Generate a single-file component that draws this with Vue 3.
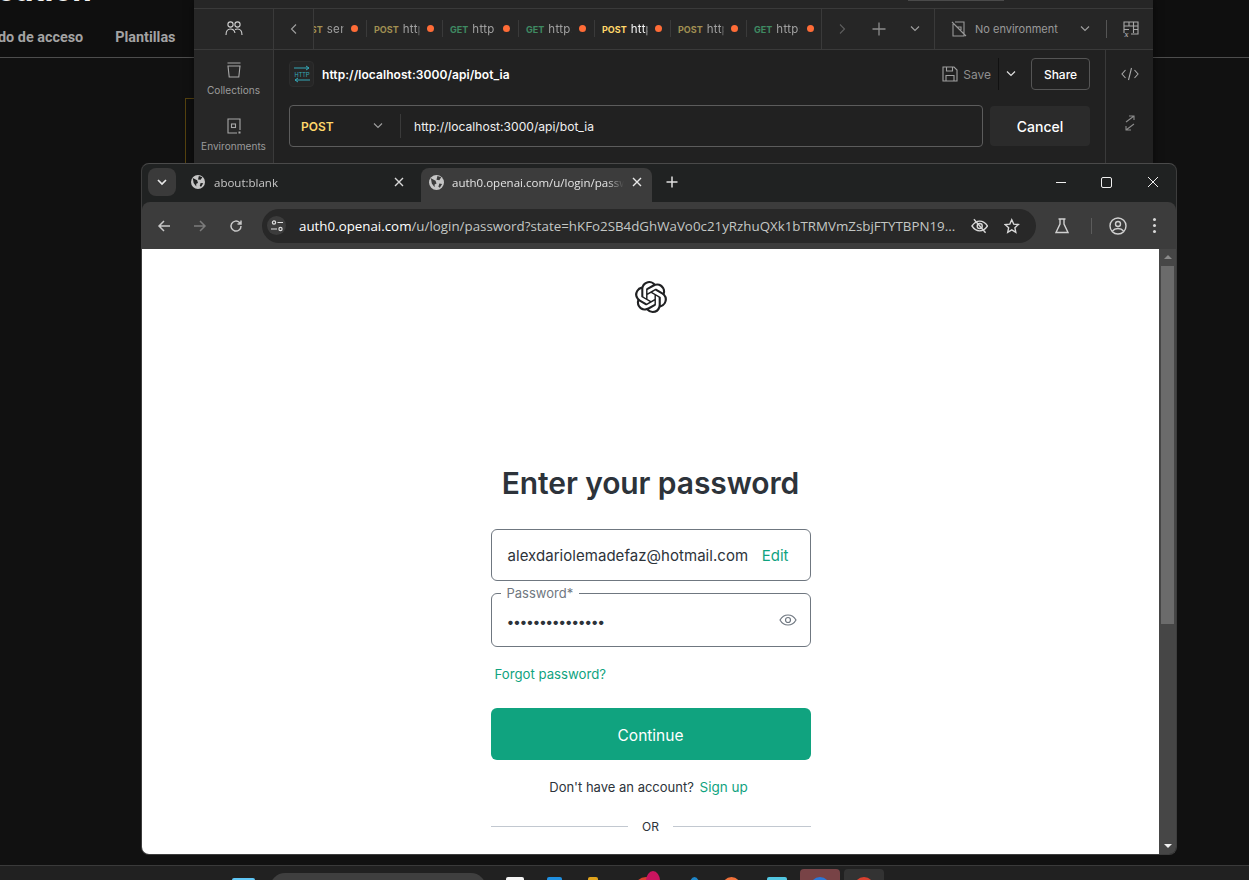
<template>
  <div class="desktop">
    <!-- page behind everything -->
    <div class="bg-page">
      <div class="bg-title">cation</div>
      <div class="bg-nav">
        <span class="bg-link first">do de acceso</span>
        <span class="bg-link">Plantillas</span>
      </div>
    </div>
    <div class="bg-box"></div>

    <!-- postman window -->
    <section class="pm">
      <div class="pm-top"><span class="pm-search"></span></div>
      <div class="pm-body">
        <aside class="pm-rail">
          <div class="rail-people">
            <svg width="20" height="20" viewBox="0 0 20 20" fill="none" stroke="#d0d0d0" stroke-width="1.1">
              <circle cx="6.5" cy="5.5" r="2.6" />
              <circle cx="13.5" cy="5.5" r="2.6" />
              <path d="M2 16c0-4 2-6 4.500-6s4 1.600 4.500 4M11 10.600c.8-.4 1.600-.6 2.500-.6 2.500 0 4.500 2 4.500 6" />
            </svg>
          </div>
          <div class="rail-item">
            <svg width="18" height="18" viewBox="0 0 18 18" fill="none" stroke="#a8a8a8" stroke-width="1.1">
              <path d="M2.500 2h13M3 5h12l-1.200 11H4.200z" />
            </svg>
            <span>Collections</span>
          </div>
          <div class="rail-item">
            <svg width="18" height="18" viewBox="0 0 18 18" fill="none" stroke="#a8a8a8" stroke-width="1.1">
              <path d="M15 13V2H3v14h9" />
              <rect x="6.500" y="7" width="4" height="3.500" />
              <rect x="13.500" y="14.500" width="2" height="2" fill="#a8a8a8" stroke="none" />
            </svg>
            <span>Environments</span>
          </div>
        </aside>
        <div class="pm-main">
          <div class="pm-tabbar">
            <div class="tab-nav">
              <svg width="10" height="12" viewBox="0 0 10 12" fill="none" stroke="#a0a0a0" stroke-width="1.1"><path d="M7 1.500 2.500 6 7 10.500" /></svg>
            </div>
            <div class="tab-list">
              <div v-for="(tab, i) in tabs" :key="i" class="tab" :class="{ active: tab.active }">
                <span class="tab-method" :class="tab.method.toLowerCase()">{{ tab.method }}</span>
                <span class="tab-name">{{ tab.name }}</span>
                <span class="tab-dot"></span>
              </div>
            </div>
            <div class="tab-tools">
              <svg width="10" height="12" viewBox="0 0 10 12" fill="none" stroke="#5e5e5e" stroke-width="1.1"><path d="M3 1.500 7.500 6 3 10.500" /></svg>
              <svg width="14" height="14" viewBox="0 0 14 14" fill="none" stroke="#8c8c8c" stroke-width="1.3"><path d="M7 .5v13M.5 7h13" /></svg>
              <svg width="10" height="8" viewBox="0 0 10 8" fill="none" stroke="#a0a0a0" stroke-width="1.1"><path d="M1 1.500 5 5.500l4-4" /></svg>
            </div>
            <div class="env">
              <svg width="16" height="16" viewBox="0 0 16 16" fill="none" stroke="#999" stroke-width="1.1">
                <path d="M2 3v12h11V1H4M1 1l14 14M6 6h4v3" />
              </svg>
              <span class="env-name">No environment</span>
              <svg class="env-chev" width="10" height="8" viewBox="0 0 10 8" fill="none" stroke="#a0a0a0" stroke-width="1.1"><path d="M1 1.500 5 5.500l4-4" /></svg>
              <span class="env-sep"></span>
              <svg width="16" height="16" viewBox="0 0 16 16" fill="none" stroke="#a8a8a8" stroke-width="1.1">
                <path d="M1 12V1h14v12H8M1 5h14M6 1v4M10.500 1v11M1 8.500h5M10.500 8.500H15" />
                <text x="1.500" y="15.500" class="var-text">x</text>
              </svg>
            </div>
          </div>
          <div class="pm-content">
            <div class="pm-request">
              <div class="req-head">
                <span class="req-icon">
                  <svg width="18" height="18" viewBox="0 0 18 18" fill="none" stroke="#34a8b8" stroke-width="1">
                    <path d="M1 3h15M13 1l3 2-3 2M17 15H2M5 13l-3 2 3 2" />
                    <text x="1.500" y="12" textLength="15" lengthAdjust="spacingAndGlyphs" class="http-text">HTTP</text>
                  </svg>
                </span>
                <span class="req-title">http://localhost:3000/api/bot_ia</span>
                <span class="req-save">
                  <svg width="16" height="16" viewBox="0 0 16 16" fill="none" stroke="#a0a0a0" stroke-width="1.1">
                    <path d="M1 1h11l3 3v11H1zM4.500 1v4h6V1M4 15v-5.500h8V15" />
                  </svg>
                  Save
                </span>
                <span class="req-chev">
                  <svg width="10" height="8" viewBox="0 0 10 8" fill="none" stroke="#e0e0e0" stroke-width="1.2"><path d="M1 1.500 5 5.500l4-4" /></svg>
                </span>
                <button class="share">Share</button>
              </div>
              <div class="req-line">
                <div class="url-box">
                  <span class="url-method">POST</span>
                  <svg width="10" height="8" viewBox="0 0 10 8" fill="none" stroke="#a0a0a0" stroke-width="1.1"><path d="M1 1.500 5 5.500l4-4" /></svg>
                  <span class="url-sep"></span>
                  <span class="url-text">http://localhost:3000/api/bot_ia</span>
                </div>
                <button class="cancel">Cancel</button>
              </div>
            </div>
            <aside class="pm-side">
              <svg width="18" height="14" viewBox="0 0 18 14" fill="none" stroke="#a8a8a8" stroke-width="1.1"><path d="M4.500 3 1 7l3.500 4M13.500 3 17 7l-3.500 4M10.500 1 7.500 13" /></svg>
              <svg width="12" height="16" viewBox="0 0 12 16" fill="none" stroke="#8c8c8c" stroke-width="1.1"><path d="M2 7 10 1M5 1h5v4M10 9 2 15M7 15H2v-4" /></svg>
            </aside>
          </div>
        </div>
      </div>
    </section>

    <!-- chrome window -->
    <section class="chrome">
      <div class="ch-tabs">
        <span class="ch-drop">
          <svg width="10" height="7" viewBox="0 0 10 7" fill="none" stroke="#e8e8e8" stroke-width="1.700"><path d="M1 1l4 4 4-4" /></svg>
        </span>
        <div class="ch-tab">
          <svg class="globe" width="14" height="14" viewBox="0 0 16 16"><circle cx="8" cy="8" r="8" fill="#c6c6c6" /><path d="M2 3.500 7 6l1 3-2 1v3L3 9zM9 1l4 1.500-2 3-3-.5zM11 9l3 .5-2.500 4-1.500-1z" fill="#202222" /></svg>
          <span class="ch-tab-text">about:blank</span>
          <svg width="10" height="10" viewBox="0 0 10 10" fill="none" stroke="#d8d8d8" stroke-width="1.400"><path d="M1 1l8 8M9 1 1 9" /></svg>
        </div>
        <div class="ch-tab active">
          <svg class="globe" width="15" height="15" viewBox="0 0 16 16"><circle cx="8" cy="8" r="8" fill="#c6c6c6" /><path d="M2 3.500 7 6l1 3-2 1v3L3 9zM9 1l4 1.500-2 3-3-.5zM11 9l3 .5-2.500 4-1.500-1z" fill="#3c3c3c" /></svg>
          <span class="ch-tab-text">auth0.openai.com/u/login/password</span>
          <svg width="10" height="10" viewBox="0 0 10 10" fill="none" stroke="#e8e8e8" stroke-width="1.400"><path d="M1 1l8 8M9 1 1 9" /></svg>
        </div>
        <svg class="ch-plus" width="12" height="12" viewBox="0 0 12 12" fill="none" stroke="#e0e0e0" stroke-width="1.500"><path d="M6 .5v11M.5 6h11" /></svg>
        <div class="win-btns">
          <svg width="12" height="12" viewBox="0 0 12 12" fill="none" stroke="#f0f0f0"><path d="M1 6.500h10" /></svg>
          <svg width="12" height="12" viewBox="0 0 12 12" fill="none" stroke="#f0f0f0"><rect x=".5" y="1.500" width="10" height="10" rx="1.500" /></svg>
          <svg width="12" height="12" viewBox="0 0 12 12" fill="none" stroke="#f0f0f0"><path d="M1 1l10 10M11 1 1 11" /></svg>
        </div>
      </div>
      <div class="ch-toolbar">
        <svg class="tb-back" width="14" height="14" viewBox="0 0 14 14" fill="none" stroke="#c8c8c8" stroke-width="1.500"><path d="M13 7H2M7 2 2 7l5 5" /></svg>
        <svg class="tb-fwd" width="14" height="14" viewBox="0 0 14 14" fill="none" stroke="#7c7c7c" stroke-width="1.500"><path d="M1 7h11M7 2l5 5-5 5" /></svg>
        <svg class="tb-reload" width="14" height="14" viewBox="0 0 14 14" fill="none" stroke="#c8c8c8" stroke-width="1.500"><path d="M12 7a5 5 0 1 1-1.500-3.500L12 5M12 1.500V5H8.500" /></svg>
        <div class="omnibox">
          <span class="chip">
            <svg width="12" height="12" viewBox="0 0 12 12" fill="none" stroke="#e0e0e0" stroke-width="1.200">
              <circle cx="3" cy="2.500" r="1.600" /><path d="M6.500 2.500H12M0 9h6" /><circle cx="9.500" cy="9" r="1.600" />
            </svg>
          </span>
          <span class="omni-url"><b>auth0.openai.com</b>/u/login/password?state=hKFo2SB4dGhWaVo0c21yRzhuQXk1bTRMVmZsbjFTYTBPN19...</span>
          <svg class="omni-eye" width="18" height="16" viewBox="0 0 18 16" fill="none" stroke="#d8d8d8" stroke-width="1.400">
            <path d="M1 8c2-3 5-5 8-5s6 2 8 5c-2 3-5 5-8 5s-6-2-8-5z" /><circle cx="9" cy="8" r="2.600" /><path d="M3 1l12 14" />
          </svg>
          <svg class="omni-star" width="16" height="16" viewBox="0 0 16 16" fill="none" stroke="#d8d8d8" stroke-width="1.400"><path d="M8 1.500 10 6l4.800.5-3.600 3.200 1 4.800L8 12l-4.200 2.500 1-4.800L1.200 6.500 6 6z" /></svg>
        </div>
        <svg class="tb-flask" width="14" height="16" viewBox="0 0 14 16" fill="none" stroke="#d0d0d0" stroke-width="1.400"><path d="M3.500 1h7M5 1v5L1 14.500h12L9 6V1" /></svg>
        <span class="tb-sep"></span>
        <svg class="tb-user" width="18" height="18" viewBox="0 0 18 18" fill="none" stroke="#d0d0d0" stroke-width="1.400"><circle cx="9" cy="9" r="8" /><circle cx="9" cy="7" r="2.500" /><path d="M3.500 14c1.500-2 3.500-2.500 5.500-2.500s4 .5 5.500 2.500" /></svg>
        <span class="tb-kebab"><i></i><i></i><i></i></span>
      </div>
      <div class="ch-view">
        <main class="page">
          <svg class="logo" width="32" height="32" viewBox="0 0 24 24" fill="#202123">
            <path d="M22.2819 9.8211a5.9847 5.9847 0 0 0-.5157-4.9108 6.0462 6.0462 0 0 0-6.5098-2.9A6.0651 6.0651 0 0 0 4.9807 4.1818a5.9847 5.9847 0 0 0-3.9977 2.9 6.0462 6.0462 0 0 0 .7427 7.0966 5.98 5.98 0 0 0 .511 4.9107 6.051 6.051 0 0 0 6.5146 2.9001A5.9847 5.9847 0 0 0 13.2599 24a6.0557 6.0557 0 0 0 5.7718-4.2058 5.9894 5.9894 0 0 0 3.9977-2.9001 6.0557 6.0557 0 0 0-.7475-7.0729zm-9.022 12.6081a4.4755 4.4755 0 0 1-2.8764-1.0408l.1419-.0804 4.7783-2.7582a.7948.7948 0 0 0 .3927-.6813v-6.7369l2.02 1.1686a.071.071 0 0 1 .038.052v5.5826a4.504 4.504 0 0 1-4.4945 4.4944zm-9.6607-4.1254a4.4708 4.4708 0 0 1-.5346-3.0137l.142.0852 4.783 2.7582a.7712.7712 0 0 0 .7806 0l5.8428-3.3685v2.3324a.0804.0804 0 0 1-.0332.0615L9.74 19.9502a4.4992 4.4992 0 0 1-6.1408-1.6464zM2.3408 7.8956a4.485 4.485 0 0 1 2.3655-1.9728V11.6a.7664.7664 0 0 0 .3879.6765l5.8144 3.3543-2.0201 1.1685a.0757.0757 0 0 1-.071 0l-4.8303-2.7865A4.504 4.504 0 0 1 2.3408 7.872zm16.5963 3.8558L13.1038 8.364 15.1192 7.2a.0757.0757 0 0 1 .071 0l4.8303 2.7913a4.4944 4.4944 0 0 1-.6765 8.1042v-5.6772a.79.79 0 0 0-.407-.667zm2.0107-3.0231l-.142-.0852-4.7735-2.7818a.7759.7759 0 0 0-.7854 0L9.409 9.2297V6.8974a.0662.0662 0 0 1 .0284-.0615l4.8303-2.7866a4.4992 4.4992 0 0 1 6.6802 4.66zM8.3065 12.863l-2.02-1.1638a.0804.0804 0 0 1-.038-.0567V6.0742a4.4992 4.4992 0 0 1 7.3757-3.4537l-.142.0805L8.704 5.459a.7948.7948 0 0 0-.3927.6813zm1.0976-2.3654l2.602-1.4998 2.6069 1.4998v2.9994l-2.5974 1.4997-2.6067-1.4997Z" />
          </svg>
          <h1>Enter your password</h1>
          <div class="field email">
            <span class="field-value">alexdariolemadefaz@hotmail.com</span>
            <a class="link edit">Edit</a>
          </div>
          <div class="field password">
            <span class="field-label">Password*</span>
            <span class="dots">•••••••••••••••</span>
            <svg width="18" height="14" viewBox="0 0 18 14" fill="none" stroke="#6f7780" stroke-width="1.200">
              <path d="M1 7c2-3.500 5-5 8-5s6 1.500 8 5c-2 3.500-5 5-8 5s-6-1.500-8-5z" /><circle cx="9" cy="7" r="2.500" />
            </svg>
          </div>
          <a class="link forgot">Forgot password?</a>
          <button class="continue">Continue</button>
          <p class="signup">Don't have an account? <a class="link">Sign up</a></p>
          <div class="or"><span>OR</span></div>
        </main>
        <div class="scroll">
          <span class="arrow up"></span>
          <span class="thumb"></span>
          <span class="arrow down"></span>
        </div>
      </div>
    </section>

    <!-- taskbar, only the tops of the icons show -->
    <footer class="taskbar">
      <span v-for="(ic, i) in taskIcons" :key="i" class="task-icon" :class="ic.cls" :style="{ left: ic.x + 'px', top: ic.y + 'px', width: ic.w + 'px', background: ic.c }"></span>
    </footer>
  </div>
</template>

<script setup>
const tabs = [
  { method: 'POST', name: 'send' },
  { method: 'POST', name: 'http' },
  { method: 'GET', name: 'http:,' },
  { method: 'GET', name: 'http:,' },
  { method: 'POST', name: 'http', active: true },
  { method: 'POST', name: 'http' },
  { method: 'GET', name: 'https' }
]

const taskIcons = [
  { x: 232, y: 12, w: 23, c: '#5fc6f5' },
  { x: 270, y: 7, w: 216, c: '#3f3f3f', cls: 'pill' },
  { x: 506, y: 11, w: 18, c: '#f5f5f5' },
  { x: 547, y: 11, w: 15, c: '#1f8fe0' },
  { x: 588, y: 11, w: 10, c: '#e0a31c' },
  { x: 635, y: 11, w: 22, c: '#d9402f', cls: 'round' },
  { x: 646, y: 5, w: 14, c: '#c9145f', cls: 'round' },
  { x: 689, y: 11, w: 11, c: '#1f86c8', cls: 'round' },
  { x: 722, y: 11, w: 19, c: '#f0713a', cls: 'round' },
  { x: 767, y: 11, w: 20, c: '#52c6e0' },
  { x: 800, y: 3, w: 40, c: '#784346', cls: 'tile' },
  { x: 810, y: 11, w: 20, c: '#2c78d8', cls: 'round' },
  { x: 844, y: 3, w: 40, c: '#333333', cls: 'tile' },
  { x: 854, y: 11, w: 20, c: '#d8402f', cls: 'round' }
]
</script>

<style>
html,
body {
  margin: 0;
  background: #0f0f0f;
}
</style>

<style scoped>
.desktop {
  position: relative;
  width: 1249px;
  height: 880px;
  overflow: hidden;
  background: #111111;
  font-family: Inter, "Liberation Sans", sans-serif;
}

/* background page */
.bg-page {
  height: 57px;
  border-bottom: 1px solid #4d4d4d;
  background: #0f0f0f;
  overflow: hidden;
}
.bg-title {
  margin: -29px 0 0 -3px;
  height: 46px;
  font: 700 34px/36px Roboto, sans-serif;
  color: #f2f2f2;
}
.bg-nav {
  display: flex;
  gap: 32px;
  margin-top: 12px;
  font: 700 14.4px/18px Roboto, sans-serif;
  color: #a3a3a3;
}
.bg-link.first {
  margin-left: -2px;
}
.bg-box {
  position: absolute;
  left: 185px;
  top: 98px;
  width: 40px;
  height: 80px;
  box-sizing: border-box;
  border: 1px solid #55420f;
  background: #0f0f0f;
}

/* postman */
.pm {
  position: absolute;
  left: 194px;
  top: 0;
  width: 959px;
  height: 170px;
  background: #212121;
  box-shadow: 0 0 8px rgba(0, 0, 0, 0.5);
  display: flex;
  flex-direction: column;
}
.pm-top {
  height: 8px;
  border-bottom: 1px solid #3a3a3a;
  background: #262626;
  position: relative;
}
.pm-search {
  position: absolute;
  left: 714px;
  top: 0;
  width: 96px;
  height: 1px;
  background: #4a4a4a;
}
.pm-body {
  flex: 1;
  display: flex;
}
.pm-rail {
  width: 79px;
  border-right: 1px solid #3a3a3a;
  background: #272727;
  display: flex;
  flex-direction: column;
}
.rail-people {
  height: 40px;
  display: flex;
  align-items: center;
  justify-content: center;
  border-bottom: 1px solid #3a3a3a;
}
.rail-item {
  height: 56px;
  box-sizing: border-box;
  padding-top: 1px;
  display: flex;
  flex-direction: column;
  align-items: center;
  justify-content: center;
  gap: 5px;
  font-size: 10.1px;
  line-height: 13px;
  color: #9a9a9a;
}
.pm-main {
  flex: 1;
  display: flex;
  flex-direction: column;
  min-width: 0;
}
.pm-tabbar {
  height: 40px;
  display: flex;
  background: #262626;
  border-bottom: 1px solid #3a3a3a;
}
.tab-nav {
  width: 39px;
  border-right: 1px solid #3a3a3a;
  display: flex;
  align-items: center;
  justify-content: center;
}
.tab-list {
  width: 507px;
  display: flex;
  overflow: hidden;
}
.tab {
  position: relative;
  flex: 0 0 76px;
  min-width: 0;
  box-sizing: border-box;
  height: 40px;
  padding: 0 8px;
  display: flex;
  align-items: center;
  gap: 4px;
  font-size: 11.5px;
}
.tab:first-child {
  margin-left: -24px;
}
.tab + .tab::before {
  content: "";
  position: absolute;
  left: 0;
  top: 11px;
  height: 17px;
  width: 1px;
  background: #3a3a3a;
}
.tab-method {
  font-size: 9px;
  font-weight: 700;
}
.tab-method.post {
  color: #a08f52;
}
.tab-method.get {
  color: #3f8a62;
}
.tab-name {
  flex: 1;
  min-width: 0;
  overflow: hidden;
  white-space: nowrap;
  letter-spacing: 0.35px;
  color: #a0a0a0;
  -webkit-mask-image: linear-gradient(90deg, #000 90%, transparent);
  mask-image: linear-gradient(90deg, #000 90%, transparent);
}
.tab-dot {
  flex-shrink: 0;
  width: 7px;
  height: 7px;
  margin: 0 0 1px 3px;
  border-radius: 50%;
  background: #ff6c37;
}
.tab.active .tab-method {
  color: #ffd76a;
}
.tab.active .tab-name {
  color: #f4f4f4;
}
.tab.active::after {
  content: "";
  position: absolute;
  left: 8px;
  right: 8px;
  bottom: -1px;
  height: 1px;
  background: #ff6c37;
}
.tab-tools {
  width: 114px;
  box-sizing: border-box;
  padding: 0 14px 0 15px;
  border-left: 1px solid #3a3a3a;
  border-right: 1px solid #3a3a3a;
  display: flex;
  align-items: center;
  justify-content: space-between;
}
.env {
  flex: 1;
  display: flex;
  align-items: center;
  padding-left: 16px;
  font-size: 11px;
  color: #9a9a9a;
}
.env-name {
  margin-left: 8px;
  width: 93px;
  white-space: nowrap;
}
.env-chev {
  margin-left: 12px;
}
.env-sep {
  width: 1px;
  height: 18px;
  margin: 0 16px 0 16px;
  background: #555;
}
.var-text {
  font: italic 700 8px "Liberation Serif", serif;
  fill: #a8a8a8;
  stroke: none;
}
.pm-content {
  flex: 1;
  display: flex;
}
.pm-request {
  width: 831px;
  flex-shrink: 0;
  box-sizing: border-box;
  padding: 8px 15px 0;
  display: flex;
  flex-direction: column;
  gap: 15px;
}
.req-head {
  display: flex;
  align-items: center;
  height: 32px;
}
.req-icon {
  width: 25px;
  height: 26px;
  box-sizing: border-box;
  border: 1px solid #2d2d2d;
  border-radius: 4px;
  background: #262626;
  display: flex;
  align-items: center;
  justify-content: center;
}
.http-text {
  font: 400 8px "Liberation Sans", sans-serif;
  fill: #34a8b8;
  stroke: none;
}
.req-title {
  margin-left: 8px;
  flex: 1;
  font-size: 12px;
  font-weight: 600;
  letter-spacing: 0.06px;
  color: #ffffff;
}
.req-save {
  display: flex;
  align-items: center;
  gap: 5px;
  font-size: 12px;
  color: #8f8f8f;
}
.req-chev {
  width: 25px;
  height: 32px;
  margin-left: 7px;
  border-left: 1px solid #111;
  display: flex;
  align-items: center;
  justify-content: center;
  box-sizing: border-box;
}
.share {
  width: 59px;
  height: 32px;
  margin-left: 8px;
  padding: 0;
  border: 1px solid #555;
  border-radius: 4px;
  background: transparent;
  color: #ffffff;
  font: 500 12px Inter, sans-serif;
}
.req-line {
  display: flex;
  align-items: center;
  justify-content: space-between;
}
.url-box {
  width: 694px;
  height: 42px;
  box-sizing: border-box;
  padding-left: 11px;
  border: 1px solid #5c5c5c;
  border-radius: 4px;
  display: flex;
  align-items: center;
}
.url-method {
  width: 72px;
  font-size: 12px;
  font-weight: 600;
  color: #ffd76a;
}
.url-sep {
  width: 1px;
  height: 24px;
  margin: 0 13px 0 17px;
  background: #3a3a3a;
}
.url-text {
  font-size: 12.1px;
  color: #f0f0f0;
}
.cancel {
  width: 100px;
  height: 40px;
  padding: 0;
  border: 0;
  border-radius: 4px;
  background: #2b2b2b;
  color: #ffffff;
  font: 500 14px Inter, sans-serif;
}
.pm-side {
  flex: 1;
  border-left: 1px solid #3a3a3a;
  box-sizing: border-box;
  padding: 17px 0 0 0;
  display: flex;
  flex-direction: column;
  align-items: center;
  gap: 34px;
}

/* chrome */
.chrome {
  position: absolute;
  left: 141px;
  top: 163px;
  width: 1036px;
  height: 692px;
  box-sizing: border-box;
  border: 1px solid #3d3d3d;
  border-top-color: #4a4a4a;
  border-radius: 8px;
  background: #202222;
  overflow: hidden;
  display: flex;
  flex-direction: column;
  font-family: "Open Sans", sans-serif;
}
.ch-tabs {
  height: 38px;
  display: flex;
  align-items: flex-end;
  flex-shrink: 0;
  position: relative;
}
.ch-drop {
  position: absolute;
  left: 6px;
  top: 4px;
  width: 28px;
  height: 28px;
  border-radius: 8px;
  background: #3a3a3a;
  display: flex;
  align-items: center;
  justify-content: center;
}
.ch-tab {
  width: 231px;
  height: 34px;
  box-sizing: border-box;
  margin-left: 41px;
  padding: 0 10px 6px 8px;
  display: flex;
  align-items: center;
  gap: 9px;
  font-size: 11.5px;
  color: #c8c8c8;
  border-radius: 8px 8px 0 0;
}
.ch-tab.active {
  margin-left: 7px;
  gap: 8px;
  background: #3c3c3c;
  color: #e4e4e4;
}
.ch-tab-text {
  flex: 1;
  min-width: 0;
  overflow: hidden;
  white-space: nowrap;
  -webkit-mask-image: linear-gradient(90deg, #000 90%, transparent);
  mask-image: linear-gradient(90deg, #000 90%, transparent);
}
.ch-plus {
  margin: 0 0 14px 14px;
}
.win-btns {
  margin-left: auto;
  align-self: flex-start;
  width: 104px;
  margin-right: 17px;
  height: 36px;
  display: flex;
  justify-content: space-between;
  align-items: center;
}
.ch-toolbar {
  height: 47px;
  flex-shrink: 0;
  background: #3c3c3c;
  border-radius: 8px 8px 0 0;
  display: flex;
  align-items: center;
  padding: 0 0 0 15px;
}
.tb-fwd {
  margin-left: 22px;
}
.tb-reload {
  margin-left: 22px;
}
.omnibox {
  width: 774px;
  height: 34px;
  margin-left: 19px;
  box-sizing: border-box;
  padding: 0 16px 0 5px;
  border-radius: 17px;
  background: #282828;
  display: flex;
  align-items: center;
}
.chip {
  width: 19px;
  height: 19px;
  border-radius: 50%;
  background: #3c3c3c;
  display: flex;
  align-items: center;
  justify-content: center;
  flex-shrink: 0;
}
.omni-url {
  margin-left: 13px;
  width: 665px;
  flex-shrink: 0;
  overflow: hidden;
  white-space: nowrap;
  font-size: 13.33px;
  color: #c4c7c5;
}
.omni-url b {
  font-weight: 400;
  color: #ffffff;
}
.omni-eye {
  margin-left: 7px;
}
.omni-star {
  margin-left: 16px;
}
.tb-flask {
  margin-left: 19px;
}
.tb-sep {
  width: 1px;
  height: 16px;
  margin: 0 17px 0 22px;
  background: #5c5c5c;
}
.tb-kebab {
  margin-left: 26px;
  display: flex;
  flex-direction: column;
  gap: 3px;
}
.tb-kebab i {
  width: 3px;
  height: 3px;
  border-radius: 50%;
  background: #d8d8d8;
}
.ch-view {
  flex: 1;
  min-height: 0;
  display: flex;
}
.page {
  flex: 1;
  background: #ffffff;
  display: flex;
  flex-direction: column;
  align-items: center;
  color: #2d333a;
  font-family: Inter, sans-serif;
}
.logo {
  margin-top: 32px;
}
.page h1 {
  margin: 150px 0 0;
  font-size: 30px;
  line-height: 40px;
  font-weight: 600;
  letter-spacing: -0.1px;
}
.field {
  width: 320px;
  box-sizing: border-box;
  border: 1px solid #6f7780;
  border-radius: 6px;
  display: flex;
  align-items: center;
  padding: 0 21px 0 15px;
  position: relative;
  font-size: 15px;
}
.email {
  height: 52px;
  margin-top: 26px;
}
.field-value {
  flex: 1;
  padding-left: 1px;
  white-space: nowrap;
  letter-spacing: 0.04px;
}
.password {
  height: 54px;
  margin-top: 12px;
  padding-right: 13px;
  justify-content: space-between;
}
.field-label {
  position: absolute;
  left: 9px;
  top: -9px;
  padding: 0 6px;
  background: #ffffff;
  font-size: 13px;
  line-height: 16px;
  color: #6f7780;
}
.dots {
  font-size: 14px;
  letter-spacing: -1.4px;
  padding-top: 2px;
}
.link {
  color: #10a37f;
}
.forgot {
  width: 320px;
  box-sizing: border-box;
  padding-left: 4px;
  margin-top: 18px;
  font-size: 13.2px;
  line-height: 18px;
}
.continue {
  width: 320px;
  height: 52px;
  margin-top: 25px;
  padding: 2px 0 0;
  border: 0;
  border-radius: 6px;
  background: #10a37f;
  color: #ffffff;
  font: 400 15.5px Inter, sans-serif;
}
.signup {
  margin: 18px 0 0;
  padding-right: 4px;
  font-size: 13px;
  line-height: 18px;
}
.signup .link {
  margin-left: 2px;
  font-size: 13.5px;
}
.or {
  width: 320px;
  margin-top: 21px;
  display: flex;
  align-items: center;
  font-size: 12px;
  line-height: 16px;
}
.or::before,
.or::after {
  content: "";
  flex: 1;
  height: 1px;
  background: #c2c8d0;
}
.or span {
  padding: 2px 14.5px 0;
}
.scroll {
  width: 17px;
  background: #464646;
  position: relative;
}
.thumb {
  position: absolute;
  left: 2px;
  top: 17px;
  width: 13px;
  height: 358px;
  background: #6b6b6b;
}
.arrow {
  position: absolute;
  left: 5px;
  width: 0;
  height: 0;
  border-left: 4px solid transparent;
  border-right: 4px solid transparent;
}
.arrow.up {
  top: 6px;
  border-bottom: 4px solid #8a8a8a;
}
.arrow.down {
  bottom: 6px;
  border-top: 4px solid #f0f0f0;
}

/* taskbar */
.taskbar {
  position: absolute;
  left: 0;
  right: 0;
  top: 865px;
  height: 15px;
  background: #212121;
  border-top: 1px solid #3a3a3a;
  overflow: hidden;
}
.task-icon {
  position: absolute;
  height: 20px;
  border-radius: 2px;
}
.task-icon.round {
  height: 20px;
  border-radius: 50%;
}
.task-icon.pill {
  height: 30px;
  border-radius: 15px;
}
.task-icon.tile {
  height: 20px;
  border-radius: 4px;
}
</style>
